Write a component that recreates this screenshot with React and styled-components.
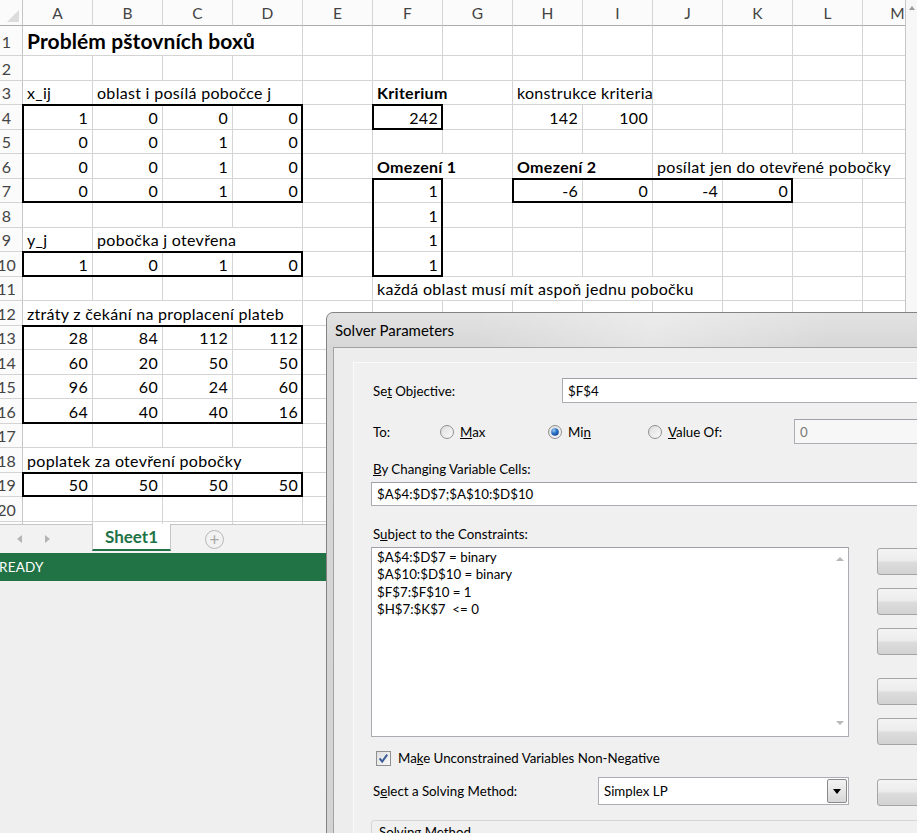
import React from 'react';
import styled, { createGlobalStyle } from 'styled-components';

const GlobalStyle = createGlobalStyle`
  html, body {
    margin: 0;
    padding: 0;
    background: #efefef;
  }
  body {
    font-family: Lato, "Liberation Sans", sans-serif;
  }
`;

const COLS = ['A', 'B', 'C', 'D', 'E', 'F', 'G', 'H', 'I', 'J', 'K', 'L', 'M'];
const ROWS = 21;

const buildCells = () => {
  const cells = {
    A1: { v: 'Problém pštovních boxů', title: true, span: 4 },
    A3: { v: 'x_ij' },
    B3: { v: 'oblast i posílá pobočce j', span: 3 },
    F3: { v: 'Kriterium', bold: true, span: 2 },
    H3: { v: 'konstrukce kriteria', span: 2 },
    F6: { v: 'Omezení 1', bold: true, span: 2 },
    H6: { v: 'Omezení 2', bold: true, span: 2 },
    J6: { v: 'posílat jen do otevřené pobočky', span: 4 },
    A9: { v: 'y_j' },
    B9: { v: 'pobočka j otevřena', span: 3 },
    F11: { v: 'každá oblast musí mít aspoň jednu pobočku', span: 5 },
    A12: { v: 'ztráty z čekání na proplacení plateb', span: 4 },
    A18: { v: 'poplatek za otevření pobočky', span: 4 },
  };
  const fill = (row, col, values) => values.forEach((n, i) => {
    cells[`${COLS[col + i]}${row}`] = { v: String(n), num: true };
  });
  fill(4, 0, [1, 0, 0, 0]);
  fill(5, 0, [0, 0, 1, 0]);
  fill(6, 0, [0, 0, 1, 0]);
  fill(7, 0, [0, 0, 1, 0]);
  fill(4, 5, [242]);
  fill(4, 7, [142, 100]);
  fill(7, 5, [1]);
  fill(8, 5, [1]);
  fill(9, 5, [1]);
  fill(10, 5, [1]);
  fill(7, 7, [-6, 0, -4, 0]);
  fill(10, 0, [1, 0, 1, 0]);
  fill(13, 0, [28, 84, 112, 112]);
  fill(14, 0, [60, 20, 50, 50]);
  fill(15, 0, [96, 60, 24, 60]);
  fill(16, 0, [64, 40, 40, 16]);
  fill(19, 0, [50, 50, 50, 50]);
  return cells;
};

const CELLS = buildCells();

// thick outlines: [firstRow, lastRow, firstCol, lastCol]
const BOXES = [
  [4, 7, 0, 3],
  [4, 4, 5, 5],
  [7, 10, 5, 5],
  [7, 7, 7, 10],
  [10, 10, 0, 3],
  [13, 16, 0, 3],
  [19, 19, 0, 3],
];

const CONSTRAINTS = [
  '$A$4:$D$7 = binary',
  '$A$10:$D$10 = binary',
  '$F$7:$F$10 = 1',
  '$H$7:$K$7  <= 0',
];

const Screen = styled.div`
  position: relative;
  width: 917px;
  height: 833px;
  overflow: hidden;
  background: #efefef;
`;

const Excel = styled.div`
  margin-left: -9px;
  width: 926px;
  display: flex;
  flex-direction: column;
`;

const SheetArea = styled.div`
  display: flex;
  height: 524px;
  background: #fff;
`;

const GridViewport = styled.div`
  flex: 1;
  overflow: hidden;
`;

const Grid = styled.div`
  display: grid;
  grid-template-columns: 32px repeat(13, 70px);
  grid-template-rows: 26px 30px repeat(20, 24.5px);
  width: max-content;
`;

const Corner = styled.div`
  grid-row: 1;
  grid-column: 1;
  position: relative;
  background: #fbfbfb;
  border-right: 1px solid #c6c6c6;
  border-bottom: 1px solid #ababab;
  box-sizing: border-box;
  &::after {
    content: '';
    position: absolute;
    right: 3px;
    bottom: 3px;
    border-style: solid;
    border-width: 0 0 12px 12px;
    border-color: transparent transparent #dcdcdc transparent;
  }
`;

const ColHead = styled.div`
  grid-row: 1;
  grid-column: ${({ $col }) => $col};
  display: flex;
  align-items: center;
  justify-content: center;
  background: #fbfbfb;
  border-right: 1px solid #d4d4d4;
  border-bottom: 1px solid #ababab;
  box-sizing: border-box;
  color: #444;
  font-size: 15.5px;
  padding-top: 1px;
`;

const RowHead = styled.div`
  grid-row: ${({ $row }) => $row};
  grid-column: 1;
  display: flex;
  align-items: center;
  justify-content: center;
  background: #fbfbfb;
  border-right: 1px solid #c6c6c6;
  border-bottom: 1px solid #d4d4d4;
  box-sizing: border-box;
  color: #444;
  font-size: 16px;
  padding-top: 1px;
`;

const Cell = styled.div`
  grid-row: ${({ $row }) => $row};
  grid-column: ${({ $col, $span }) => `${$col} / span ${$span}`};
  display: flex;
  align-items: flex-end;
  justify-content: ${({ $num }) => ($num ? 'flex-end' : 'flex-start')};
  padding: 0 4px 2px 4px;
  border-right: 1px solid #d4d4d4;
  border-bottom: 1px solid #d4d4d4;
  box-sizing: border-box;
  white-space: nowrap;
  font-size: ${({ $title }) => ($title ? '21px' : '16px')};
  letter-spacing: ${({ $title }) => ($title ? '0.1px' : '0.3px')};
  font-weight: ${({ $bold, $title }) => ($bold || $title ? 700 : 400)};
  line-height: ${({ $title }) => ($title ? '24px' : '18px')};
  color: #000;
`;

const RangeBox = styled.div`
  grid-row: ${({ $r1, $r2 }) => `${$r1 + 1} / ${$r2 + 2}`};
  grid-column: ${({ $c1, $c2 }) => `${$c1 + 2} / ${$c2 + 3}`};
  margin: -1px 0 0 -1px;
  border: 2px solid #000;
  position: relative;
  z-index: 1;
  pointer-events: none;
`;

const VScroll = styled.div`
  width: 12px;
  background: #f7f7f7;
  border-left: 1px solid #c6c6c6;
  box-sizing: border-box;
  display: flex;
  justify-content: center;
  padding-top: 6px;
`;

const UpArrow = styled.div`
  width: 0;
  height: 0;
  border-style: solid;
  border-width: 0 3px 4px 3px;
  border-color: transparent transparent #9a9a9a transparent;
`;

const TabBar = styled.div`
  height: 29px;
  background: #f2f2f2;
  border-top: 1px solid #c6c6c6;
  box-sizing: border-box;
  display: flex;
  align-items: stretch;
  padding-left: 26px;
`;

const TabNav = styled.div`
  width: 75px;
  display: flex;
  align-items: center;
  gap: 23px;
`;

const NavArrow = styled.div`
  width: 0;
  height: 0;
  border-style: solid;
  border-width: ${({ $dir }) => ($dir === 'left' ? '4px 5px 4px 0' : '4px 0 4px 5px')};
  border-color: ${({ $dir }) => ($dir === 'left'
    ? 'transparent #b4b4b4 transparent transparent'
    : 'transparent transparent transparent #b4b4b4')};
`;

const SheetTab = styled.div`
  width: 79px;
  margin-top: -1px;
  margin-bottom: 2px;
  background: #fff;
  border-left: 1px solid #c6c6c6;
  border-right: 1px solid #c6c6c6;
  border-bottom: 2px solid #217346;
  box-sizing: border-box;
  display: flex;
  align-items: center;
  justify-content: center;
  color: #217346;
  font-weight: 700;
  font-size: 17px;
`;

const AddSheet = styled.div`
  align-self: center;
  margin-left: 34px;
  width: 19px;
  height: 19px;
  border: 1px solid #b8b8b8;
  border-radius: 50%;
  box-sizing: border-box;
  display: flex;
  align-items: center;
  justify-content: center;
  color: #a8a8a8;
  font-size: 17px;
  line-height: 1;
`;

const StatusBar = styled.div`
  height: 28px;
  background: #217346;
  color: #fff;
  display: flex;
  align-items: center;
  padding-left: 8px;
  font-size: 13.5px;
  letter-spacing: 0.2px;
`;

const Dialog = styled.div`
  position: absolute;
  left: 326px;
  top: 312px;
  width: 720px;
  height: 560px;
  box-sizing: border-box;
  border: 1px solid #838383;
  border-radius: 7px 7px 0 0;
  background: linear-gradient(180deg, #e2e2e2 0px, #d7d7d7 34px, #d3d3d3 100%);
  padding-left: 6px;
  display: flex;
  flex-direction: column;
  font-family: Lato, "Liberation Sans", sans-serif;
  font-size: 13.3px;
  color: #000;
`;

const TitleBar = styled.div`
  height: 34px;
  flex: none;
  display: flex;
  align-items: center;
  padding-left: 2px;
  font-size: 15px;
  background: linear-gradient(100deg, rgba(255, 255, 255, 0) 20%, rgba(255, 255, 255, 0.35) 45%, rgba(255, 255, 255, 0) 70%);
`;

const Client = styled.div`
  flex: 1;
  border: 1px solid #a2a2a2;
  border-right: none;
  border-bottom: none;
  background: #ededed;
  padding: 14px 0 0 19px;
`;

const Panel = styled.div`
  height: 100%;
  background: #f0f0f0;
  border-top: 1px solid #fafafa;
  border-left: 1px solid #fafafa;
  padding: 15px 0 0 19px;
  display: flex;
  flex-direction: column;
`;

const FieldRow = styled.div`
  display: flex;
  align-items: center;
  height: 25px;
  margin-top: ${({ $gap }) => $gap || 0}px;
`;

const FieldLabel = styled.div`
  width: ${({ $w }) => $w}px;
  flex: none;
`;

const TextBox = styled.div`
  width: ${({ $w }) => $w}px;
  height: ${({ $h }) => $h || 25}px;
  flex: none;
  box-sizing: border-box;
  border: 1px solid #abadb3;
  border-top-color: #9da0a8;
  background: ${({ $disabled }) => ($disabled ? '#f7f7f7' : '#fff')};
  color: ${({ $disabled }) => ($disabled ? '#777' : '#000')};
  display: flex;
  align-items: center;
  padding-left: 5px;
  margin-left: ${({ $shift }) => $shift || 0}px;
  margin-top: ${({ $gap }) => $gap || 0}px;
`;

const RadioOption = styled.div`
  width: ${({ $w }) => $w}px;
  flex: none;
  display: flex;
  align-items: center;
  gap: 6px;
`;

const SectionLabel = styled.div`
  height: 17px;
  line-height: 17px;
  margin-top: ${({ $gap }) => $gap}px;
`;

const ListRow = styled.div`
  display: flex;
  margin-top: 4px;
  height: 190px;
`;

const ListBox = styled.div`
  width: 478px;
  flex: none;
  margin-left: -2px;
  box-sizing: border-box;
  border: 1px solid #abadb3;
  border-top-color: #9da0a8;
  background: #fff;
  display: flex;
`;

const ListLines = styled.div`
  flex: 1;
  padding: 1px 5px;
  line-height: 17.3px;
  white-space: pre;
`;

const ListScroll = styled.div`
  width: 17px;
  display: flex;
  flex-direction: column;
  align-items: center;
  justify-content: space-between;
  padding: 9px 0 11px;
`;

const ScrollArrow = styled.div`
  width: 0;
  height: 0;
  border-style: solid;
  border-width: ${({ $down }) => ($down ? '4px 4px 0 4px' : '0 4px 4px 4px')};
  border-color: ${({ $down }) => ($down
    ? '#b8b8b8 transparent transparent transparent'
    : 'transparent transparent #b8b8b8 transparent')};
`;

const ButtonColumn = styled.div`
  margin-left: 28px;
  padding-top: 1px;
  display: flex;
  flex-direction: column;
`;

const DialogButton = styled.div`
  width: 110px;
  height: 27px;
  flex: none;
  box-sizing: border-box;
  border: 1px solid #a5a5a5;
  border-radius: 3px;
  background: linear-gradient(180deg, #f4f4f4 0%, #ececec 45%, #dcdcdc 55%, #d2d2d2 100%);
  margin-top: ${({ $gap }) => $gap || 0}px;
`;

const CheckRow = styled.div`
  margin-top: 12px;
  height: 18px;
  display: flex;
  align-items: center;
  gap: 7px;
  padding-left: 3px;
`;

const MethodRow = styled.div`
  margin-top: 10px;
  height: 28px;
  display: flex;
  align-items: center;
`;

const Select = styled.div`
  width: 251px;
  height: 28px;
  flex: none;
  box-sizing: border-box;
  border: 1px solid #abadb3;
  background: #fff;
  display: flex;
  align-items: stretch;
`;

const SelectText = styled.div`
  flex: 1;
  display: flex;
  align-items: center;
  padding-left: 5px;
`;

const SelectButton = styled.div`
  width: 20px;
  margin: 1px;
  box-sizing: border-box;
  border: 1px solid #8a8a8a;
  border-radius: 2px;
  background: linear-gradient(180deg, #f3f3f3 0%, #e6e6e6 50%, #d6d6d6 100%);
  display: flex;
  align-items: center;
  justify-content: center;
`;

const MethodButton = styled(DialogButton)`
  margin-left: 28px;
  align-self: flex-start;
  margin-top: 2px;
`;

const GroupBox = styled.div`
  margin-top: 15px;
  margin-left: -2px;
  width: 600px;
  height: 60px;
  box-sizing: border-box;
  border: 1px solid #d5d5d5;
  border-radius: 3px;
  padding: 3px 0 0 7px;
  line-height: 17px;
`;

const RadioIcon = ({ checked }) => (
  <svg width="14" height="14" viewBox="0 0 14 14">
    <defs>
      <linearGradient id="radioFace" x1="0" y1="0" x2="1" y2="1">
        <stop offset="0" stopColor="#dcdcdc" />
        <stop offset="1" stopColor="#fbfbfb" />
      </linearGradient>
      <radialGradient id="radioDot" cx="0.35" cy="0.3" r="0.8">
        <stop offset="0" stopColor="#9ccaf5" />
        <stop offset="0.45" stopColor="#2f77c9" />
        <stop offset="1" stopColor="#11438e" />
      </radialGradient>
    </defs>
    <circle cx="7" cy="7" r="6.5" fill="url(#radioFace)" stroke="#8e8f8f" />
    {checked && <circle cx="7" cy="7" r="3.8" fill="url(#radioDot)" />}
  </svg>
);

const CheckIcon = () => (
  <svg width="15" height="15" viewBox="0 0 15 15">
    <defs>
      <linearGradient id="checkFace" x1="0" y1="0" x2="1" y2="1">
        <stop offset="0" stopColor="#dedede" />
        <stop offset="1" stopColor="#fafafa" />
      </linearGradient>
    </defs>
    <rect x="0.5" y="0.5" width="14" height="14" fill="url(#checkFace)" stroke="#8e8f8f" />
    <path d="M3.6 7.4 L6.2 10.6 L11.2 3.6" fill="none" stroke="#3e5c99" strokeWidth="2" />
  </svg>
);

const DownTriangle = () => (
  <svg width="8" height="5" viewBox="0 0 8 5">
    <path d="M0 0 H8 L4 5 Z" fill="#000" />
  </svg>
);

const Sheet = () => {
  const items = [<Corner key="corner" />];
  COLS.forEach((col, i) => {
    items.push(<ColHead key={`h${col}`} $col={i + 2}>{col}</ColHead>);
  });
  for (let r = 1; r <= ROWS; r += 1) {
    items.push(<RowHead key={`r${r}`} $row={r + 1}>{r}</RowHead>);
    let skip = 0;
    COLS.forEach((col, i) => {
      if (skip > 0) {
        skip -= 1;
        return;
      }
      const data = CELLS[`${col}${r}`] || {};
      const span = data.span || 1;
      skip = span - 1;
      items.push(
        <Cell
          key={`${col}${r}`}
          $row={r + 1}
          $col={i + 2}
          $span={span}
          $num={data.num}
          $bold={data.bold}
          $title={data.title}
        >
          {data.v}
        </Cell>,
      );
    });
  }
  BOXES.forEach(([r1, r2, c1, c2]) => {
    items.push(<RangeBox key={`b${r1}-${c1}`} $r1={r1} $r2={r2} $c1={c1} $c2={c2} />);
  });
  return <Grid>{items}</Grid>;
};

const SolverDialog = () => (
  <Dialog>
    <TitleBar>Solver Parameters</TitleBar>
    <Client>
      <Panel>
        <FieldRow>
          <FieldLabel $w={189}>Se<u>t</u> Objective:</FieldLabel>
          <TextBox $w={400}>$F$4</TextBox>
        </FieldRow>
        <FieldRow $gap={16}>
          <FieldLabel $w={67}>To:</FieldLabel>
          <RadioOption $w={108}>
            <RadioIcon />
            <span><u>M</u>ax</span>
          </RadioOption>
          <RadioOption $w={100}>
            <RadioIcon checked />
            <span>Mi<u>n</u></span>
          </RadioOption>
          <RadioOption $w={146}>
            <RadioIcon />
            <span><u>V</u>alue Of:</span>
          </RadioOption>
          <TextBox $w={200} $disabled>0</TextBox>
        </FieldRow>
        <SectionLabel $gap={17}><u>B</u>y Changing Variable Cells:</SectionLabel>
        <TextBox $w={560} $h={24} $shift={-2} $gap={4}>$A$4:$D$7;$A$10:$D$10</TextBox>
        <SectionLabel $gap={20}>S<u>u</u>bject to the Constraints:</SectionLabel>
        <ListRow>
          <ListBox>
            <ListLines>
              {CONSTRAINTS.map((line) => <div key={line}>{line}</div>)}
            </ListLines>
            <ListScroll>
              <ScrollArrow />
              <ScrollArrow $down />
            </ListScroll>
          </ListBox>
          <ButtonColumn>
            <DialogButton />
            <DialogButton $gap={13} />
            <DialogButton $gap={13} />
            <DialogButton $gap={23} />
            <DialogButton $gap={13} />
          </ButtonColumn>
        </ListRow>
        <CheckRow>
          <CheckIcon />
          <span>Ma<u>k</u>e Unconstrained Variables Non-Negative</span>
        </CheckRow>
        <MethodRow>
          <FieldLabel $w={225}>S<u>e</u>lect a Solving Method:</FieldLabel>
          <Select>
            <SelectText>Simplex LP</SelectText>
            <SelectButton>
              <DownTriangle />
            </SelectButton>
          </Select>
          <MethodButton />
        </MethodRow>
        <GroupBox>Solving Method</GroupBox>
      </Panel>
    </Client>
  </Dialog>
);

const App = () => (
  <Screen>
    <GlobalStyle />
    <Excel>
      <SheetArea>
        <GridViewport>
          <Sheet />
        </GridViewport>
        <VScroll>
          <UpArrow />
        </VScroll>
      </SheetArea>
      <TabBar>
        <TabNav>
          <NavArrow $dir="left" />
          <NavArrow $dir="right" />
        </TabNav>
        <SheetTab>Sheet1</SheetTab>
        <AddSheet>+</AddSheet>
      </TabBar>
      <StatusBar>READY</StatusBar>
    </Excel>
    <SolverDialog />
  </Screen>
);

export default App;
